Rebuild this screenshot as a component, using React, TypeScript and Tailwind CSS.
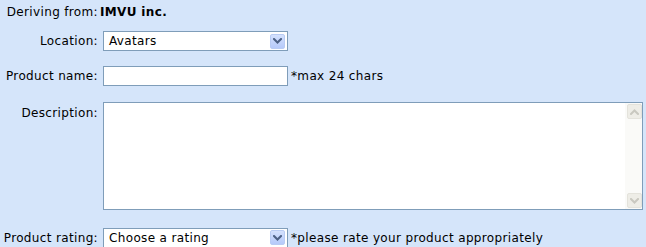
import React from "react";

const font = { fontFamily: '"DejaVu Sans", Verdana, sans-serif', letterSpacing: "0.35px" };

function Chevron({ color, up = false }: { color: string; up?: boolean }) {
  return (
    <svg width="9" height="6" viewBox="0 0 9 6" className={up ? "rotate-180" : ""}>
      <path d="M1 1 L4.5 4.5 L8 1" fill="none" stroke={color} strokeWidth="2" strokeLinecap="square" />
    </svg>
  );
}

function Select({ value }: { value: string }) {
  return (
    <div className="ml-[3px] flex h-[20px] w-[185px] items-center justify-between border border-[#7f9db9] bg-white pl-[5px] pr-[2px]">
      <span className="text-[12px] leading-none text-black">{value}</span>
      <div className="flex h-[15px] w-[15px] items-center justify-center rounded-[2px] border border-[#b9ccf4] bg-gradient-to-b from-[#d4e1fd] to-[#b6cafa]">
        <Chevron color="#4d6185" />
      </div>
    </div>
  );
}

function Label({ children, top = false }: { children: React.ReactNode; top?: boolean }) {
  return (
    <div className={`w-[100px] shrink-0 pr-[2px] text-right text-[12px] text-black ${top ? "pt-[2px]" : ""}`}>
      {children}
    </div>
  );
}

export default function App() {
  return (
    <div className="h-[247px] w-[646px] overflow-hidden bg-[#d5e5fa]" style={font}>
      <div className="flex h-[24px] items-center">
        <Label>Deriving from:</Label>
        <span className="text-[12px] font-bold text-black">IMVU inc.</span>
      </div>

      <div className="mt-[7px] flex h-[20px] items-center">
        <Label>Location:</Label>
        <Select value="Avatars" />
      </div>

      <div className="mt-[15px] flex h-[20px] items-center">
        <Label>Product name:</Label>
        <div className="ml-[3px] h-[20px] w-[185px] border border-[#7f9db9] bg-white" />
        <span className="ml-[3px] text-[12px] text-black">*max 24 chars</span>
      </div>

      <div className="mt-[16px] flex items-start">
        <Label top>Description:</Label>
        <div className="ml-[3px] flex h-[108px] w-[540px] border border-[#7f9db9] bg-white">
          <div className="flex-1" />
          <div className="flex w-[17px] flex-col items-center justify-between bg-[#fafaf8] py-[1px] pl-[1px]">
            <div className="flex h-[15px] w-[15px] items-center justify-center rounded-[2px] border border-[#e4e3dc] bg-[#eeede7]">
              <Chevron color="#c9c8c0" up />
            </div>
            <div className="flex h-[15px] w-[15px] items-center justify-center rounded-[2px] border border-[#e4e3dc] bg-[#eeede7]">
              <Chevron color="#c9c8c0" />
            </div>
          </div>
        </div>
      </div>

      <div className="mt-[18px] flex h-[19px] items-center">
        <Label>Product rating:</Label>
        <Select value="Choose a rating" />
        <span className="ml-[3px] text-[12px] text-black">*please rate your product appropriately</span>
      </div>
    </div>
  );
}
